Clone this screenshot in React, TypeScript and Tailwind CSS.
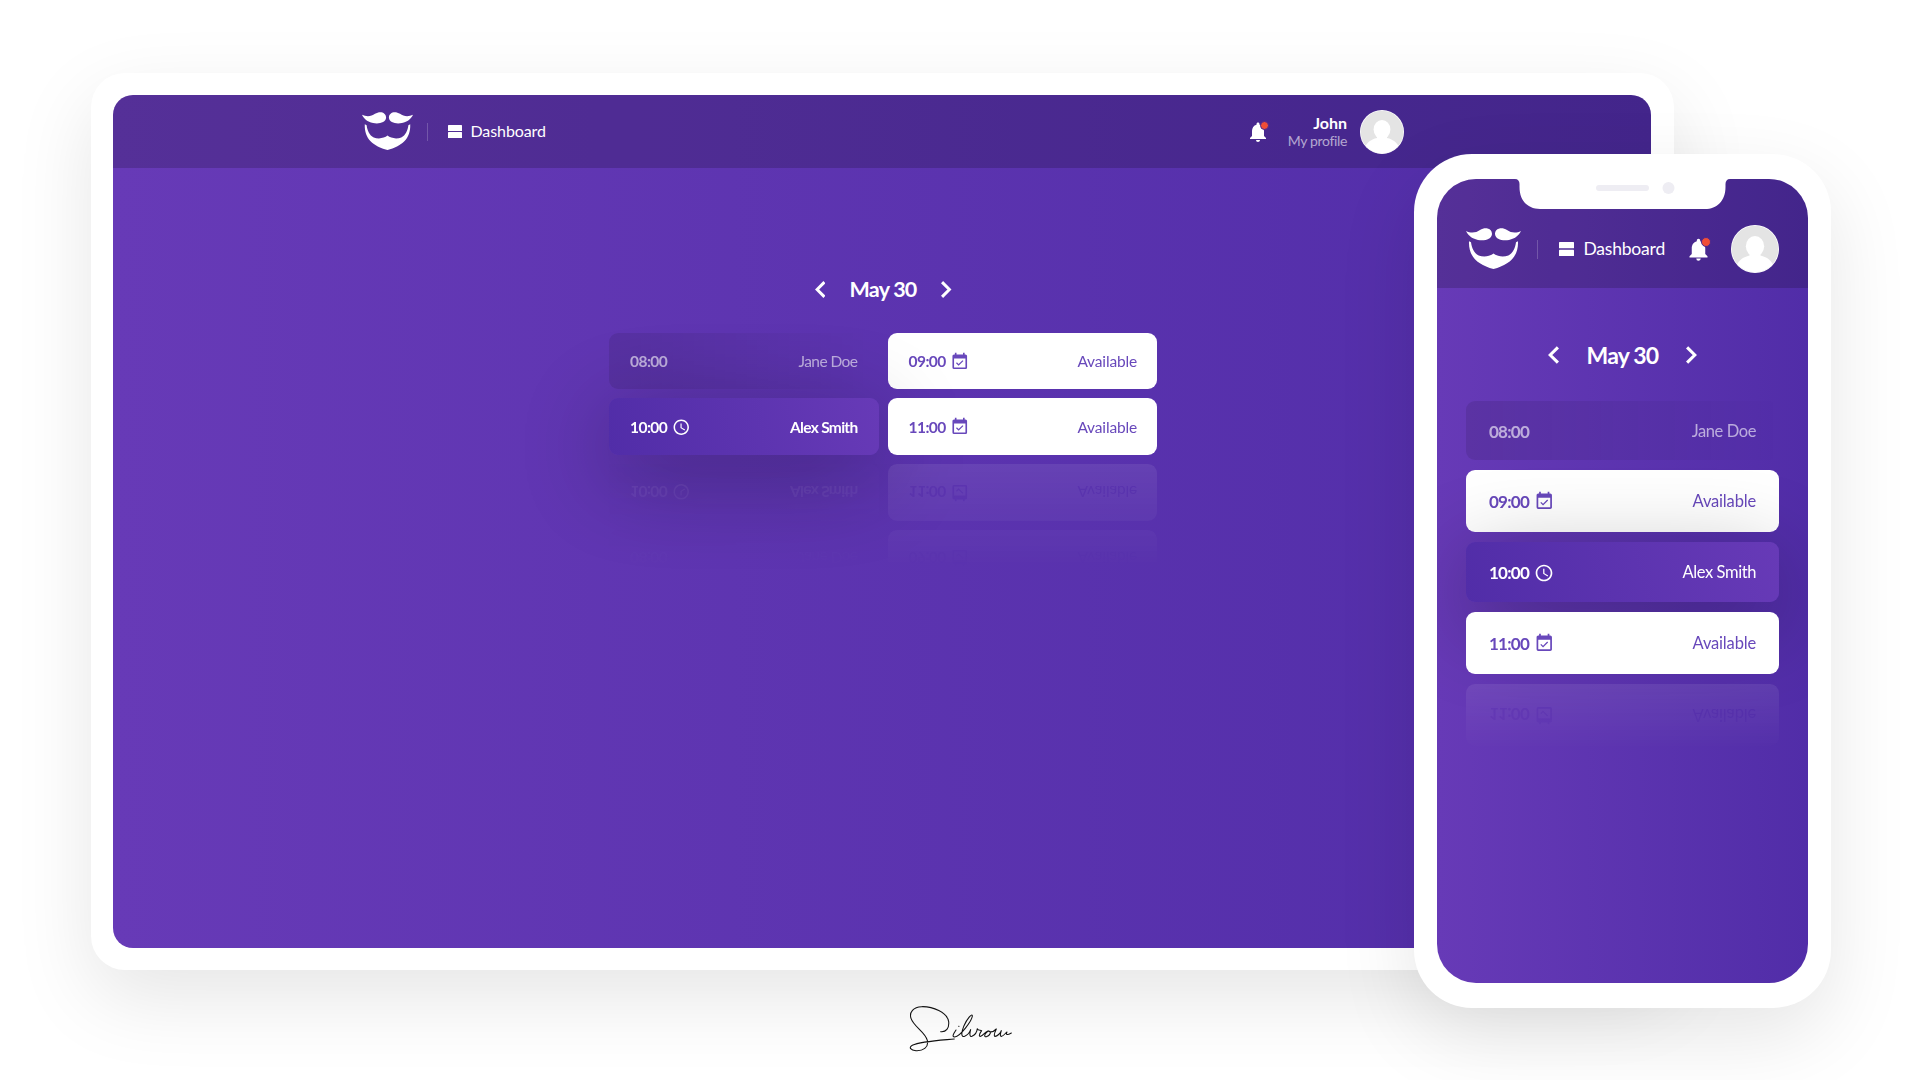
import React from "react";
import { MdAccessTime, MdEventAvailable, MdNotifications } from "react-icons/md";

type Slot = { time: string; label: string; kind: "past" | "free" | "mine" };

const slots: Slot[] = [
  { time: "08:00", label: "Jane Doe", kind: "past" },
  { time: "09:00", label: "Available", kind: "free" },
  { time: "10:00", label: "Alex Smith", kind: "mine" },
  { time: "11:00", label: "Available", kind: "free" },
];

function Logo({ className }: { className: string }) {
  const brow =
    "M0 9 C14 16 30 15 42 6 C58 -5 78 1 78 18 C77 35 54 40 36 36 C17 32 6 22 0 9 Z";
  return (
    <svg viewBox="0 0 165 124" className={className} fill="#fff" preserveAspectRatio="none">
      <path d={brow} />
      <path d={brow} transform="translate(165 0) scale(-1 1)" />
      <path d="M9 40 C7 88 37 112 82.500 124 C128 112 158 88 156 40 L150 43 C148 60 141 76 127 83 C112 89 93 86 82.500 77 C72 86 53 89 38 83 C24 76 17 60 15 43 Z" />
    </svg>
  );
}

function DashboardIcon({ className }: { className: string }) {
  return (
    <svg viewBox="0 0 14 13" className={className} fill="#fff" preserveAspectRatio="none">
      <rect width="14" height="5.900" rx="0.500" />
      <rect y="7.100" width="14" height="5.900" rx="0.500" />
    </svg>
  );
}

function Avatar({ className }: { className: string }) {
  return (
    <svg viewBox="0 0 44 44" className={className}>
      <defs>
        <clipPath id="face">
          <circle cx="22" cy="22" r="21.300" />
        </clipPath>
      </defs>
      <circle cx="22" cy="22" r="22" fill="#fff" />
      <g clipPath="url(#face)">
        <rect width="44" height="44" fill="#e4e4e4" />
        <ellipse cx="22" cy="19.500" rx="8.400" ry="9.400" fill="#fff" />
        <path d="M17 25 h10 v3 C33 29.500 36 32 38.500 36 V44 H5.500 V36 C8 32 11 29.500 17 28 Z" fill="#fff" />
      </g>
    </svg>
  );
}

function Bell({ big }: { big?: boolean }) {
  return (
    <div className="relative flex shrink-0">
      <MdNotifications className={big ? "size-[27px] text-white" : "size-[24px] text-white"} />
      <span
        className={
          big
            ? "absolute right-[1px] top-[1px] size-[10px] rounded-full border border-[#4a2890] bg-[#f04e36]"
            : "absolute right-[1px] top-[1px] size-[9px] rounded-full border border-[#4a2890] bg-[#f04e36]"
        }
      />
    </div>
  );
}

function SlotCard({ slot, big }: { slot: Slot; big?: boolean }) {
  const tone =
    slot.kind === "past"
      ? "bg-linear-to-r from-black/10 to-transparent text-white/60"
      : slot.kind === "free"
        ? "bg-white text-[#6848bb]"
        : "bg-linear-[75deg] from-[#512da8] to-[#673ab7] text-white shadow-[0_20px_90px_rgba(0,0,0,0.32)]";
  const height = !big
    ? "h-[56.500px]"
    : slot.kind === "past"
      ? "h-[59px]"
      : slot.kind === "free"
        ? "h-[61.500px]"
        : "h-[60.500px]";
  const label = big
    ? slot.kind === "free"
      ? "text-[16.500px] tracking-[-0.01em]"
      : "text-[16.500px] tracking-[-0.025em]"
    : slot.kind === "mine"
      ? "font-bold tracking-[-0.045em]"
      : slot.kind === "free"
        ? "-mr-px tracking-[-0.01em]"
        : "tracking-[-0.035em]";
  return (
    <div
      className={`flex items-center rounded-[9px] ${tone} ${height} ${
        big ? "px-[23px] pt-[2px] text-[17px]" : "pl-[21px] pr-[21px] pt-[2px] text-[15.500px]"
      }`}
    >
      <span className={`font-bold ${big ? "tracking-[-0.045em]" : "tracking-[-0.035em]"}`}>{slot.time}</span>
      {slot.kind === "free" && (
        <MdEventAvailable
          className={big ? "mb-px ml-[4.500px] size-[20.500px]" : "mb-px ml-[4.500px] size-[19.500px]"}
        />
      )}
      {slot.kind === "mine" && (
        <MdAccessTime className={big ? "ml-[5px] size-[20px]" : "ml-[4.500px] size-[18.500px]"} />
      )}
      <span className={`ml-auto ${label}`}>{slot.label}</span>
    </div>
  );
}

function Chevron({ d, className }: { d: string; className: string }) {
  return (
    <svg viewBox="0 0 10 16" className={className} fill="none" stroke="#fff" strokeWidth="2.800">
      <path d={d} />
    </svg>
  );
}

function DayPicker({ big }: { big?: boolean }) {
  const arrow = big ? "h-[18px] w-[11px]" : "h-[17px] w-[10.500px]";
  return (
    <div className="flex items-center justify-center">
      <Chevron d="M9 1 L2 8 L9 15" className={arrow} />
      <span
        className={
          big
            ? "mx-[27px] w-[73px] whitespace-nowrap text-center text-[23px] font-bold leading-[36px] tracking-[-0.035em] text-white"
            : "mx-[24.500px] w-[67px] whitespace-nowrap text-center text-[21.500px] font-bold leading-[31px] tracking-[-0.035em] text-white"
        }
      >
        May 30
      </span>
      <Chevron d="M1 1 L8 8 L1 15" className={arrow} />
    </div>
  );
}

function DesktopFrame() {
  return (
    <div className="ml-[91px] h-[897px] w-[1583px] rounded-[34px] bg-white p-[22px] shadow-[0_28px_80px_rgba(0,0,0,0.1)]">
      <div className="flex h-[853px] w-[1538px] flex-col overflow-hidden rounded-[20px] bg-linear-to-r from-[#673ab7] to-[#512da8]">
        <header className="flex h-[73px] shrink-0 items-center bg-black/[0.17] pl-[249px] pr-[247px]">
          <Logo className="mb-px h-[38px] w-[51px]" />
          <span className="ml-[14px] h-[18px] w-px bg-white/20" />
          <DashboardIcon className="ml-[20px] h-[13px] w-[14px]" />
          <span className="mb-[2px] ml-[8.500px] text-[16px] tracking-[-0.006em] text-white">Dashboard</span>
          <div className="ml-auto flex items-center">
            <Bell />
            <div className="ml-[18px] text-right leading-[18px]">
              <div className="text-[16px] font-bold text-white">John</div>
              <div className="text-[14px] tracking-[-0.025em] text-white/60">My profile</div>
            </div>
            <Avatar className="ml-[13px] size-[44px]" />
          </div>
        </header>
        <main className="mx-auto mt-[106px] w-[548px] translate-x-px">
          <DayPicker />
          <div className="mt-[27.500px] grid grid-cols-2 gap-[9px] [-webkit-box-reflect:below_9px_linear-gradient(transparent_16px,rgba(255,255,255,0.08))]">
            {slots.map((s) => (
              <SlotCard key={s.time} slot={s} />
            ))}
          </div>
        </main>
      </div>
    </div>
  );
}

function PhoneNotch() {
  return (
    <svg viewBox="0 0 215 30" className="absolute left-[78px] top-0 h-[30px] w-[215px]">
      <path d="M0 0 C3 0 4.500 2 4.500 5 V8 C4.500 22 13 30 25 30 H190 C202 30 210.500 22 210.500 8 V5 C210.500 2 212 0 215 0 Z" fill="#fff" />
      <rect x="81" y="6" width="53" height="6" rx="3" fill="#eeedf3" />
      <circle cx="153.500" cy="9" r="6" fill="#eeedf3" />
    </svg>
  );
}

function PhoneFrame() {
  return (
    <div className="absolute left-[1414px] top-[154px] h-[854px] w-[417px] rounded-[58px] bg-white pl-[23px] pt-[25px] shadow-[0_28px_80px_rgba(0,0,0,0.1)]">
      <div className="relative flex h-[804px] w-[371px] flex-col overflow-hidden rounded-[39px] bg-linear-to-r from-[#673ab7] to-[#512da8]">
        <PhoneNotch />
        <header className="flex h-[109px] shrink-0 items-center bg-black/[0.17] pl-[29px] pr-[29px] pt-[31px]">
          <Logo className="mb-px h-[41px] w-[55px] shrink-0" />
          <span className="ml-[16px] h-[19px] w-px bg-white/20" />
          <DashboardIcon className="ml-[21px] h-[14px] w-[15px] shrink-0" />
          <span className="ml-[9.500px] text-[17.500px] tracking-[-0.012em] text-white">Dashboard</span>
          <div className="ml-auto flex items-center">
            <Bell big />
            <Avatar className="ml-[19px] size-[48px]" />
          </div>
        </header>
        <main className="mx-[29px] mt-[48.500px]">
          <DayPicker big />
          <div className="mt-[28.500px] grid gap-[10px] [-webkit-box-reflect:below_10px_linear-gradient(transparent_205px,rgba(255,255,255,0.08))]">
            {slots.map((s) => (
              <SlotCard key={s.time} slot={s} big />
            ))}
          </div>
        </main>
      </div>
    </div>
  );
}

function Signature() {
  return (
    <svg
      viewBox="0 0 420 240"
      className="relative ml-[890px] mt-[20.500px] h-[80px] w-[140px]"
      fill="none"
      stroke="#111"
      strokeWidth="3.200"
      strokeLinecap="round"
      strokeLinejoin="round"
      role="img"
      aria-label="Silvrom"
    >
      <path d="M152 122 C168 124 178 112 176 92 C172 64 128 46 95 47 C70 48 57 64 63 82 C72 108 105 122 112 148 C117 170 98 180 78 179 C62 178 55 169 67 163 C92 151 150 148 193 144" />
      <path d="M198 117 C192 126 184 138 194 138 C212 136 246 88 247 75 C247 64 230 86 222 104 C212 128 214 139 224 136 C233 132 239 124 242 116 C238 130 239 138 246 136 C255 132 261 122 262 113 C265 119 270 117 275 119 C267 130 266 137 272 136 C280 133 285 122 294 120 C283 129 281 138 289 137 C301 134 306 120 295 120 C302 125 312 121 319 114 C314 124 311 132 314 136 C322 137 331 126 334 119 C331 128 329 137 335 136 C342 134 346 126 351 123 C347 131 350 134 364 126" />
      <path d="M206 106 L207 106" />
    </svg>
  );
}

export default function App() {
  return (
    <div className="relative h-[1080px] w-[1920px] overflow-hidden bg-white pt-[73px] font-['Lato',sans-serif]">
      <DesktopFrame />
      <PhoneFrame />
      <Signature />
    </div>
  );
}
